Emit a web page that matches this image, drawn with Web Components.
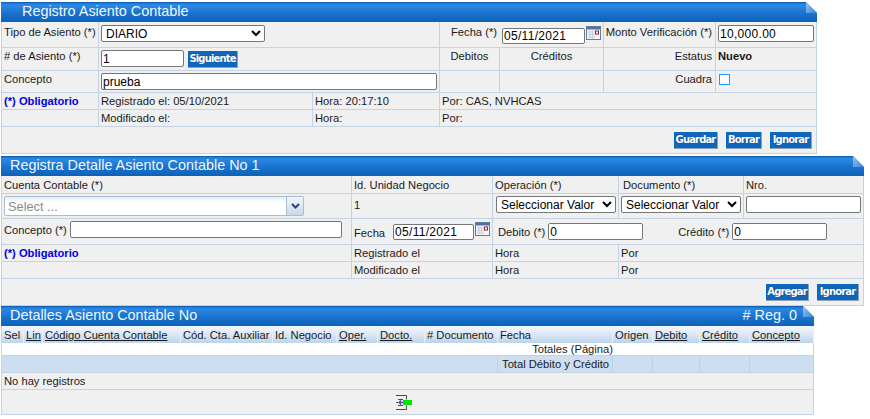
<!DOCTYPE html>
<html lang="es">
<head>
<meta charset="utf-8">
<title>Registro Asiento Contable</title>
<style>
    html, body { margin: 0; background: #fff; }
    body { padding: 2px 0 0 1px; font: 11.2px "Liberation Sans", Arial, sans-serif; color: #1a1a1a; }
</style>
</head>
<body>

<form-panel heading="Registro Asiento Contable" indent="21" width="816" cols="97 214 127 60 104 112 101" rows="26 23 22 17 17 27">
    <grid-cell>Tipo de Asiento (*)</grid-cell>
    <grid-cell span="2" pad="3 0 0 2"><native-field kind="select" w="164" value="DIARIO"></native-field></grid-cell>
    <grid-cell span="2" align="end" pad="4 2 0 0">
        <span style="margin:-1px 5px 0 0">Fecha (*)</span><date-field w="83"></date-field>
    </grid-cell>
    <grid-cell align="end" pad="3 3 0 0">Monto Verificación (*)</grid-cell>
    <grid-cell pad="3 0 0 2"><native-field w="96" value="10,000.00" spaced></native-field></grid-cell>

    <grid-cell pad="1 0 0 2"># de Asiento (*)</grid-cell>
    <grid-cell span="2" pad="2 0 0 2" gap="4"><native-field w="83" value="1"></native-field><blue-button w="50" style="margin-top:1px">Siguiente</blue-button></grid-cell>
    <grid-cell align="center" pad="1 0 0 0">Debitos</grid-cell>
    <grid-cell align="center" pad="1 0 0 0">Créditos</grid-cell>
    <grid-cell align="end" pad="1 3 0 0">Estatus</grid-cell>
    <grid-cell pad="1 0 0 2"><b>Nuevo</b></grid-cell>

    <grid-cell pad="1 0 0 2">Concepto</grid-cell>
    <grid-cell span="2" pad="2 0 0 2"><native-field w="336" value="prueba"></native-field></grid-cell>
    <grid-cell></grid-cell>
    <grid-cell></grid-cell>
    <grid-cell align="end" pad="1 3 0 0">Cuadra</grid-cell>
    <grid-cell pad="3 0 0 3"><check-box></check-box></grid-cell>

    <grid-cell pad="1 0 0 2" color="#0000e6"><b>(*) Obligatorio</b></grid-cell>
    <grid-cell pad="1 0 0 2">Registrado el: 05/10/2021</grid-cell>
    <grid-cell pad="1 0 0 2">Hora: 20:17:10</grid-cell>
    <grid-cell span="4" pad="1 0 0 2">Por: CAS, NVHCAS</grid-cell>

    <grid-cell></grid-cell>
    <grid-cell pad="1 0 0 2">Modificado el:</grid-cell>
    <grid-cell pad="1 0 0 2">Hora:</grid-cell>
    <grid-cell span="4" pad="1 0 0 2">Por:</grid-cell>

    <grid-cell span="7" align="end" pad="5 4 0 0" gap="8">
        <blue-button w="44">Guardar</blue-button><blue-button w="36">Borrar</blue-button><blue-button w="42">Ignorar</blue-button>
    </grid-cell>
</form-panel>

<form-panel heading="Registra Detalle Asiento Contable No 1" indent="9" width="863" top="2" cols="350 141 126 125 120" rows="18 25 26 17 17 27">
    <grid-cell pad="2 0 0 2">Cuenta Contable (*)</grid-cell>
    <grid-cell pad="2 0 0 2">Id. Unidad Negocio</grid-cell>
    <grid-cell pad="2 0 0 2">Operación (*)</grid-cell>
    <grid-cell pad="2 0 0 4">Documento (*)</grid-cell>
    <grid-cell pad="2 0 0 2">Nro.</grid-cell>

    <grid-cell pad="2 0 0 2"><combo-field></combo-field></grid-cell>
    <grid-cell pad="4 0 0 2">1</grid-cell>
    <grid-cell pad="2 0 0 3"><native-field kind="select" w="120" value="Seleccionar Valor"></native-field></grid-cell>
    <grid-cell pad="2 0 0 2"><native-field kind="select" w="120" value="Seleccionar Valor"></native-field></grid-cell>
    <grid-cell pad="2 0 0 2"><native-field w="115" value=""></native-field></grid-cell>

    <grid-cell pad="2 0 0 2" gap="3"><span style="padding-top:2px">Concepto (*)</span><native-field w="272" value=""></native-field></grid-cell>
    <grid-cell pad="3 0 0 2" gap="8"><span style="padding-top:4px">Fecha</span><date-field w="81"></date-field></grid-cell>
    <grid-cell span="3" pad="4 0 0 5">
        <span style="padding-top:2px;margin-right:3px">Debito (*)</span><native-field w="95" value="0"></native-field>
        <span style="padding-top:2px;margin:0 3px 0 35px">Crédito (*)</span><native-field w="95" value="0"></native-field>
    </grid-cell>

    <grid-cell pad="1 0 0 2" color="#0000e6"><b>(*) Obligatorio</b></grid-cell>
    <grid-cell pad="1 0 0 2">Registrado el</grid-cell>
    <grid-cell pad="1 0 0 2">Hora</grid-cell>
    <grid-cell span="2" pad="1 0 0 2">Por</grid-cell>

    <grid-cell></grid-cell>
    <grid-cell pad="1 0 0 2">Modificado el</grid-cell>
    <grid-cell pad="1 0 0 2">Hora</grid-cell>
    <grid-cell span="2" pad="1 0 0 2">Por</grid-cell>

    <grid-cell span="5" align="end" pad="5 4 0 0" gap="8">
        <blue-button w="43">Agregar</blue-button><blue-button w="42">Ignorar</blue-button>
    </grid-cell>
</form-panel>

<form-panel heading="Detalles Asiento Contable No" count="# Reg. 0" indent="9" width="813" cols="22 19 138 92 64 41 47 73 115 40 47 50 64" rows="17 13 17 17 25">
    <grid-cell head>Sel</grid-cell>
    <grid-cell head link>Lin</grid-cell>
    <grid-cell head link>Código Cuenta Contable</grid-cell>
    <grid-cell head>Cód. Cta. Auxiliar</grid-cell>
    <grid-cell head>Id. Negocio</grid-cell>
    <grid-cell head link>Oper.</grid-cell>
    <grid-cell head link>Docto.</grid-cell>
    <grid-cell head># Documento</grid-cell>
    <grid-cell head>Fecha</grid-cell>
    <grid-cell head>Origen</grid-cell>
    <grid-cell head link>Debito</grid-cell>
    <grid-cell head link>Crédito</grid-cell>
    <grid-cell head link>Concepto</grid-cell>

    <grid-cell span="9" align="end" pad="0 0 0 0" bg="#fff" clip><span style="margin-top:-1px">Totales (Página)</span></grid-cell>
    <grid-cell span="4" bg="#fff"></grid-cell>

    <grid-cell span="8" bg="#cddef0" tint></grid-cell>
    <grid-cell align="end" bg="#cddef0" tint pad="1 3 0 0">Total Débito y Crédito</grid-cell>
    <grid-cell bg="#cddef0" tint></grid-cell>
    <grid-cell bg="#cddef0" tint></grid-cell>
    <grid-cell bg="#cddef0" tint></grid-cell>
    <grid-cell bg="#cddef0" tint></grid-cell>

    <grid-cell span="13" pad="1 0 0 2">No hay registros</grid-cell>

    <grid-cell span="13" align="center" pad="5 7 0 0"><pager-icon></pager-icon></grid-cell>
</form-panel>

<script>
// bordered box of one panel: blue title bar with its folded corner, then a grid of cells
class FormPanel extends HTMLElement {
    constructor() {
        super();
        this.attachShadow({ mode: 'open' });
        const cols = this.getAttribute('cols').split(' ').map(n => n + 'px').join(' ');
        const rows = this.getAttribute('rows').split(' ').map(n => n + 'px').join(' ');
        this.shadowRoot.innerHTML = `
            <style>
                :host {
                    display: block;
                    width: ${this.getAttribute('width')}px;
                    margin-top: ${this.getAttribute('top') || 0}px;
                }
                .bar {
                    position: relative;
                    display: flex;
                    justify-content: space-between;
                    align-items: center;
                    height: 20px;
                    box-sizing: border-box;
                    padding: 0 17px 2px ${this.getAttribute('indent')}px;
                    color: #f2f7fc;
                    font-size: 14.4px;
                    line-height: 17px;
                    background: linear-gradient(#1c74d2 0, #2b89e6 10%, #1a74cf 50%, #0d62b7 100%);
                    border-top: 1px solid #0f62b4;
                }
                .fold { position: absolute; right: 0; top: -1px; }
                .grid {
                    display: grid;
                    grid-template-columns: ${cols};
                    grid-template-rows: ${rows};
                    border-left: 1px solid #c3d3e3;
                }
            </style>
            <div class="bar">
                <span>${this.getAttribute('heading')}</span>
                <span>${this.getAttribute('count') || ''}</span>
                <svg class="fold" width="11" height="12" viewBox="0 0 11 12">
                    <defs><linearGradient id="f" x1="0" y1="0" x2="1" y2="1">
                        <stop offset="0" stop-color="#9cc4ee"/><stop offset="1" stop-color="#2f86dc"/>
                    </linearGradient></defs>
                    <polygon points="0,0 11,0 11,11" fill="#fff"/>
                    <polygon points="0,0 11,11 0,11" fill="url(#f)"/>
                </svg>
            </div>
            <div class="grid"><slot></slot></div>
        `;
    }
}

class GridCell extends HTMLElement {
    constructor() {
        super();
        this.attachShadow({ mode: 'open' });
        const head = this.hasAttribute('head');
        const pad = (this.getAttribute('pad') || (head ? '2 0 0 2' : '3 0 0 2')).split(' ').map(n => n + 'px').join(' ');
        const align = this.getAttribute('align') || 'start';
        const justify = { start: 'flex-start', end: 'flex-end', center: 'center' }[align];
        let bg = this.getAttribute('bg') || '#f0f0f0';
        if (head) bg = 'linear-gradient(#f3f7fc, #dfe9f6 45%, #bcd4ec)';
        const line = head ? 'none' : '1px solid #c3d3e3';
        const right = head ? '1px solid #e8eff7' : line;
        const outerRight = this.hasAttribute('tint') ? '1px solid #bfd0e2' : right;
        this.shadowRoot.innerHTML = `
            <style>
                :host {
                    display: flex;
                    justify-content: ${justify};
                    align-items: flex-start;
                    gap: ${this.getAttribute('gap') || 0}px;
                    box-sizing: border-box;
                    min-width: 0;
                    grid-column: span ${this.getAttribute('span') || 1};
                    padding: ${pad};
                    background: ${bg};
                    border-right: ${this.hasAttribute('clip') ? 'none' : outerRight};
                    border-bottom: ${line};
                    color: ${this.getAttribute('color') || 'inherit'};
                    line-height: 14px;
                    white-space: nowrap;
                    ${this.hasAttribute('link') ? 'text-decoration: underline;' : ''}
                }
            </style>
            <slot></slot>
        `;
    }
}

// plain browser text input or select, sized from outside
class NativeField extends HTMLElement {
    constructor() {
        super();
        this.attachShadow({ mode: 'open' });
        const w = this.getAttribute('w');
        const h = this.getAttribute('h') || 17;
        const value = this.getAttribute('value');
        const field = this.getAttribute('kind') === 'select'
            ? `<select><option>${value}</option></select>`
            : `<input type="text" value="${value}">`;
        this.shadowRoot.innerHTML = `
            <style>
                :host { display: block; flex: none; width: ${w}px; }
                input, select {
                    display: block;
                    box-sizing: border-box;
                    width: 100%;
                    height: ${h}px;
                    margin: 0;
                    padding: 0 1px;
                    font: 12px "Liberation Sans", Arial, sans-serif;
                    letter-spacing: ${this.hasAttribute('spaced') ? '0.3px' : '0'};
                    color: #000;
                    background: #fff;
                    border: 1px solid #767676;
                    border-radius: 2px;
                    outline: none;
                }
                select { padding: 0; }
            </style>
            ${field}
        `;
    }
}

class DateField extends HTMLElement {
    constructor() {
        super();
        this.attachShadow({ mode: 'open' });
        this.shadowRoot.innerHTML = `
            <style>
                :host { display: flex; flex: none; align-items: flex-start; gap: 1px; }
                native-field { margin-top: 2px; }
                svg { display: block; }
            </style>
            <native-field w="${this.getAttribute('w')}" h="16" value="05/11/2021" spaced></native-field>
            <svg width="15" height="14" viewBox="0 0 15 14">
                <rect x="0.5" y="0.5" width="14" height="13" fill="#f4f4f6" stroke="#5e7f9f"/>
                <rect x="1" y="1" width="13" height="2.5" fill="#4c74a8"/>
                <path d="M2 6h7M2 8.500h7M2 11h7M4 4.500v8M6.500 4.500v8" stroke="#c9cdd6" fill="none"/>
                <rect x="9.500" y="5" width="3" height="3" fill="#fff" stroke="#9c1c34"/>
            </svg>
        `;
    }
}

// the "Select ..." autocomplete with its arrow button
class ComboField extends HTMLElement {
    constructor() {
        super();
        this.attachShadow({ mode: 'open' });
        this.shadowRoot.innerHTML = `
            <style>
                :host {
                    display: flex;
                    box-sizing: border-box;
                    width: 300px;
                    height: 20px;
                    border: 1px solid #a9bdd2;
                    border-radius: 2px;
                    font-size: 12.8px;
                    background: linear-gradient(#e4edf6, #fff 30%);
                }
                .text { flex: 1; padding: 2px 0 0 3px; line-height: 16px; color: #8a8a8a; }
                .btn {
                    display: flex;
                    align-items: center;
                    justify-content: center;
                    width: 16px;
                    border-left: 1px solid #a9bdd2;
                    background: linear-gradient(#f2f6fb, #c9d9ea);
                }
            </style>
            <span class="text">Select ...</span>
            <span class="btn">
                <svg width="9" height="6" viewBox="0 0 9 6"><path d="M1 1l3.500 3.500L8 1" fill="none" stroke="#27497a" stroke-width="2"/></svg>
            </span>
        `;
    }
}

class CheckBox extends HTMLElement {
    constructor() {
        super();
        this.attachShadow({ mode: 'open' });
        this.shadowRoot.innerHTML = `
            <style>
                :host {
                    display: block;
                    box-sizing: border-box;
                    width: 11px;
                    height: 11px;
                    border: 1px solid #1a9dfa;
                    background: #fbfcfe;
                }
            </style>
        `;
    }
}

class BlueButton extends HTMLElement {
    constructor() {
        super();
        this.attachShadow({ mode: 'open' });
        this.shadowRoot.innerHTML = `
            <style>
                :host {
                    display: block;
                    flex: none;
                    box-sizing: border-box;
                    width: ${this.getAttribute('w')}px;
                    height: 17px;
                    text-align: center;
                    font: bold 10px/16px "DejaVu Sans", Verdana, sans-serif;
                    letter-spacing: -0.85px;
                    color: #fff;
                    background: #0f66bd;
                    border-right: 1px solid #8da2b6;
                    border-bottom: 1px solid #8da2b6;
                    text-shadow: 0 0 1px #0a3f78;
                }
            </style>
            <slot></slot>
        `;
    }
}

// "last page" style arrow under the grid
class PagerIcon extends HTMLElement {
    constructor() {
        super();
        this.attachShadow({ mode: 'open' });
        this.shadowRoot.innerHTML = `
            <style>:host { display: block; } svg { display: block; }</style>
            <svg width="16" height="15" viewBox="0 0 16 15">
                <path d="M0 0.500h10.500v4M2 4.500h5M0 14.500h10.500v-4M2 10.500h5M0 7.500h2" fill="none" stroke="#4a4a4a"/>
                <rect x="7" y="5" width="9" height="5" fill="#00e600"/>
                <path d="M3 7.500h4M5 5.500l-2 2 2 2" fill="none" stroke="#4a4fa8" stroke-width="1.300"/>
            </svg>
        `;
    }
}

customElements.define('form-panel', FormPanel);
customElements.define('grid-cell', GridCell);
customElements.define('native-field', NativeField);
customElements.define('date-field', DateField);
customElements.define('combo-field', ComboField);
customElements.define('check-box', CheckBox);
customElements.define('blue-button', BlueButton);
customElements.define('pager-icon', PagerIcon);
</script>
</body>
</html>
